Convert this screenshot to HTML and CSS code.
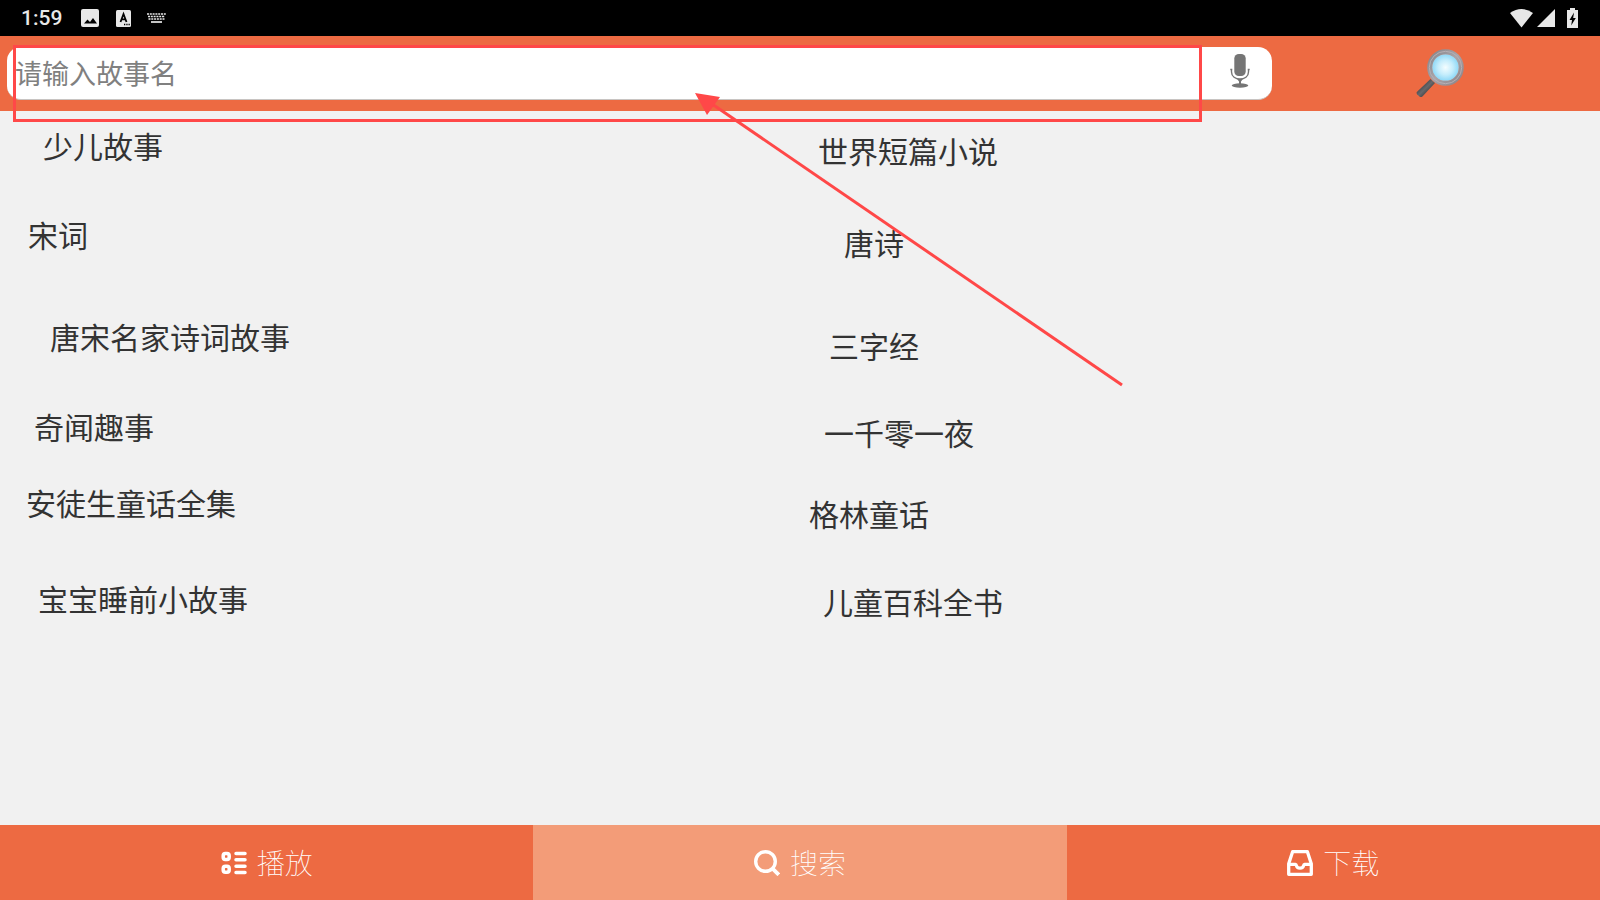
FILE: index.html
```html
<!DOCTYPE html>
<html lang="zh-CN">
<head>
<meta charset="utf-8">
<meta name="viewport" content="width=device-width, initial-scale=1">
<title>故事搜索</title>
<link rel="stylesheet" href="styles.css">
</head>
<body>
<div class="status-bar">
  <div class="status-left">
    <span class="clock">1:59</span>
    <svg class="status-picture" width="18" height="18" viewBox="0 0 18 18" aria-hidden="true"><rect width="18" height="18" rx="2" fill="#e8e8e8"/><path d="M3 14.500l3.500-4 2.500 2.500 3-4 4 5.500z" fill="#000"/></svg>
    <svg class="status-letter" width="15" height="17" viewBox="0 0 15 17" aria-hidden="true"><rect width="15" height="17" rx="1.500" fill="#e8e8e8"/><path d="M4.500 12L7.500 4l3 8M5.500 9.300h4" fill="none" stroke="#000" stroke-width="1.800"/><path d="M8 14.500h1.300M10.300 14.500h1.300M12.500 14.500h1.300" stroke="#000" stroke-width="1.300"/></svg>
    <svg class="status-keyboard" width="19" height="10" viewBox="0 0 19 10" aria-hidden="true"><g stroke="#e8e8e8" stroke-width="1.700"><path d="M0 1h19" stroke-dasharray="2 .8"/><path d="M1 3.500h17" stroke-dasharray="2 .8"/><path d="M1.500 6h16" stroke-dasharray="2 .8"/><path d="M4 9h11"/></g></svg>
  </div>
  <div class="status-right">
    <svg class="status-wifi" width="23" height="19" viewBox="0 0 23 19" aria-hidden="true"><path d="M0 4Q11.500-4 23 4L11.500 18.500z" fill="#e8e8e8"/></svg>
    <svg class="status-signal" width="18" height="18" viewBox="0 0 18 18" aria-hidden="true"><path d="M18 0v18H0z" fill="#e8e8e8"/></svg>
    <svg width="11" height="20" viewBox="0 0 11 20" aria-hidden="true"><path d="M3 0h5v2h3v18H0V2h3z" fill="#e8e8e8"/><path d="M7 4.500L2.500 12H5l-.8 5.500L8.800 10H6.200z" fill="#000"/></svg>
  </div>
</div>

<header class="search-bar">
  <form class="search-field">
    <input class="search-input" type="text" placeholder="请输入故事名" aria-label="故事名">
    <button class="voice-button" type="button" aria-label="语音输入">
      <svg width="20" height="34" viewBox="0 0 20 34" aria-hidden="true"><rect x="4.300" width="11.400" height="22" rx="4.500" fill="#757575"/><path d="M.3 15.500h2M17.700 15.500h2M1.500 15.500v2.500c0 4.500 4 7 8.500 7s8.500-2.500 8.500-7v-2.500" fill="none" stroke="#757575" stroke-width="1.400"/><path d="M7 25h6l-2 2.500V30H9v-2.500z" fill="#757575"/><ellipse cx="10" cy="31.500" rx="8.300" ry="2.200" fill="#757575"/></svg>
    </button>
  </form>
  <button class="search-button" type="button" aria-label="搜索">
    <svg width="48" height="49" viewBox="0 0 48 49" aria-hidden="true">
      <defs>
        <radialGradient id="lens"><stop offset="0" stop-color="#f4fdff"/><stop offset=".55" stop-color="#c5edfc"/><stop offset="1" stop-color="#8ed8f7"/></radialGradient>
        <linearGradient id="handle" x1="0" y1="0" x2="1" y2="1"><stop offset=".2" stop-color="#37373a"/><stop offset=".5" stop-color="#68686b"/><stop offset=".8" stop-color="#333"/></linearGradient>
        <linearGradient id="rim" x1="0" y1="0" x2="1" y2="1"><stop offset="0" stop-color="#84858b"/><stop offset=".5" stop-color="#aaa4a9"/><stop offset="1" stop-color="#8b8387"/></linearGradient>
      </defs>
      <path d="M14.500 30L.8 43q-.8 1 .3 2.300l2.300 2.200q1.600 1.200 3 0L19 34z" fill="url(#handle)"/>
      <circle cx="29.500" cy="18.500" r="15.800" fill="none" stroke="url(#rim)" stroke-width="5"/>
      <circle cx="29.500" cy="18.500" r="16.200" fill="none" stroke="#b5afb4" stroke-width="1"/>
      <circle cx="29.500" cy="18.500" r="13.300" fill="url(#lens)"/>
    </svg>
  </button>
</header>

<main class="topics">
  <ul class="topic-column topic-column-left">
    <li>少儿故事</li>
    <li>宋词</li>
    <li>唐宋名家诗词故事</li>
    <li>奇闻趣事</li>
    <li>安徒生童话全集</li>
    <li>宝宝睡前小故事</li>
  </ul>
  <ul class="topic-column topic-column-right">
    <li>世界短篇小说</li>
    <li>唐诗</li>
    <li>三字经</li>
    <li>一千零一夜</li>
    <li>格林童话</li>
    <li>儿童百科全书</li>
  </ul>
</main>

<nav class="tab-bar">
  <button class="tab" type="button">
    <svg width="26" height="26" viewBox="0 0 26 26" fill="none" stroke="#fff" stroke-width="3.500" stroke-linecap="round" aria-hidden="true"><rect x="2.200" y="3.500" width="6" height="6" rx="2.200"/><rect x="2.200" y="16.300" width="6" height="6" rx="2.200"/><path d="M15 3.500h9M15 9.800h9M15 16.200h9M15 22.400h9"/></svg>
    <span>播放</span>
  </button>
  <button class="tab tab-active" type="button" aria-current="page">
    <svg width="26" height="26" viewBox="0 0 26 26" fill="none" stroke="#fff" stroke-width="3.400" aria-hidden="true"><circle cx="11.500" cy="11.500" r="9.800"/><path d="M18.300 18.300l6.500 6.500" stroke-width="3.800"/></svg>
    <span>搜索</span>
  </button>
  <button class="tab" type="button">
    <svg width="26" height="26" viewBox="0 0 26 26" fill="none" stroke="#fff" stroke-width="3.300" stroke-linejoin="round" aria-hidden="true"><path d="M5.600 1.700h14.800l3.900 12v10.600H1.700V13.700z"/><path d="M2 14.300h6.500c.5 0 .8.500 1 1.500.5 3 6.500 3 7 0 .2-1 .5-1.500 1-1.500H24"/></svg>
    <span>下载</span>
  </button>
</nav>

<svg class="callout" width="1210" height="400" viewBox="0 0 1210 400" aria-hidden="true">
  <rect x="14.500" y="46.500" width="1186" height="74" fill="none" stroke="#ff4848" stroke-width="3"/>
  <path d="M712 104L1122 385" stroke="#ff4848" stroke-width="3"/>
  <path d="M695 93l25 4-13 18z" fill="#ff4848"/>
</svg>
</body>
</html>
```
FILE: styles.css
```css
* {
  box-sizing: border-box;
}

body {
  margin: 0;
  min-height: 100vh;
  display: flex;
  flex-direction: column;
  position: relative;
  background: #f1f1f1;
  color: #333;
  font-family: "Noto Sans CJK SC", sans-serif;
}

button,
input {
  font: inherit;
  border: 0;
  padding: 0;
  background: none;
}

button {
  display: flex;
  align-items: center;
  justify-content: center;
  cursor: pointer;
}

.status-bar {
  height: 36px;
  padding: 0 22px 0 21px;
  display: flex;
  align-items: center;
  justify-content: space-between;
  background: #000;
  color: #e8e8e8;
}

.status-left,
.status-right {
  display: flex;
  align-items: center;
}

.clock {
  font: 500 21px/36px Roboto, sans-serif;
}

.status-picture {
  margin-left: 19px;
}

.status-letter {
  margin-left: 17px;
}

.status-keyboard {
  margin-left: 16px;
}

.status-signal {
  margin: 0 12px 0 4px;
}

.search-bar {
  height: 75px;
  display: grid;
  grid-template-columns: 4fr 1fr;
  align-items: center;
  background: #ed6a42;
}

.search-field {
  height: 53px;
  margin: 0 8px 0 7px;
  display: flex;
  overflow: hidden;
  background: #fff;
  border-bottom: 1px solid #c8c4c2;
  border-radius: 14px;
}

.search-input {
  flex: 1;
  min-width: 0;
  padding: 0 0 2px 8px;
  font-size: 27px;
  color: #333;
  outline: 0;
}

.search-input::placeholder {
  color: #808080;
  opacity: 1;
}

.voice-button {
  width: 64px;
  padding-bottom: 4px;
}

.topics {
  flex: 1;
  display: grid;
  grid-template-columns: 1fr 1fr;
}

.topic-column {
  margin: 0;
  padding: 0;
  list-style: none;
  font-size: 30px;
  line-height: 40px;
}

.topic-column-left li:nth-child(1) { margin: 14px 0 0 43px; }
.topic-column-left li:nth-child(2) { margin: 49px 0 0 28px; }
.topic-column-left li:nth-child(3) { margin: 62px 0 0 50px; }
.topic-column-left li:nth-child(4) { margin: 50px 0 0 34px; }
.topic-column-left li:nth-child(5) { margin: 36px 0 0 26px; }
.topic-column-left li:nth-child(6) { margin: 56px 0 0 38px; }

.topic-column-right li:nth-child(1) { margin: 19px 0 0 18px; }
.topic-column-right li:nth-child(2) { margin: 52px 0 0 44px; }
.topic-column-right li:nth-child(3) { margin: 63px 0 0 29px; }
.topic-column-right li:nth-child(4) { margin: 47px 0 0 24px; }
.topic-column-right li:nth-child(5) { margin: 41px 0 0 9px; }
.topic-column-right li:nth-child(6) { margin: 48px 0 0 23px; }

.tab-bar {
  height: 75px;
  display: grid;
  grid-template-columns: repeat(3, 1fr);
}

.tab {
  gap: 10px;
  background: #ed6a42;
  color: #fff;
  font-size: 28px;
  font-weight: 100;
  line-height: 40px;
}

.tab span {
  padding-bottom: 2px;
}

.tab-active {
  background: #f39c78;
}

.callout {
  position: absolute;
  top: 0;
  left: 0;
  pointer-events: none;
}
```
